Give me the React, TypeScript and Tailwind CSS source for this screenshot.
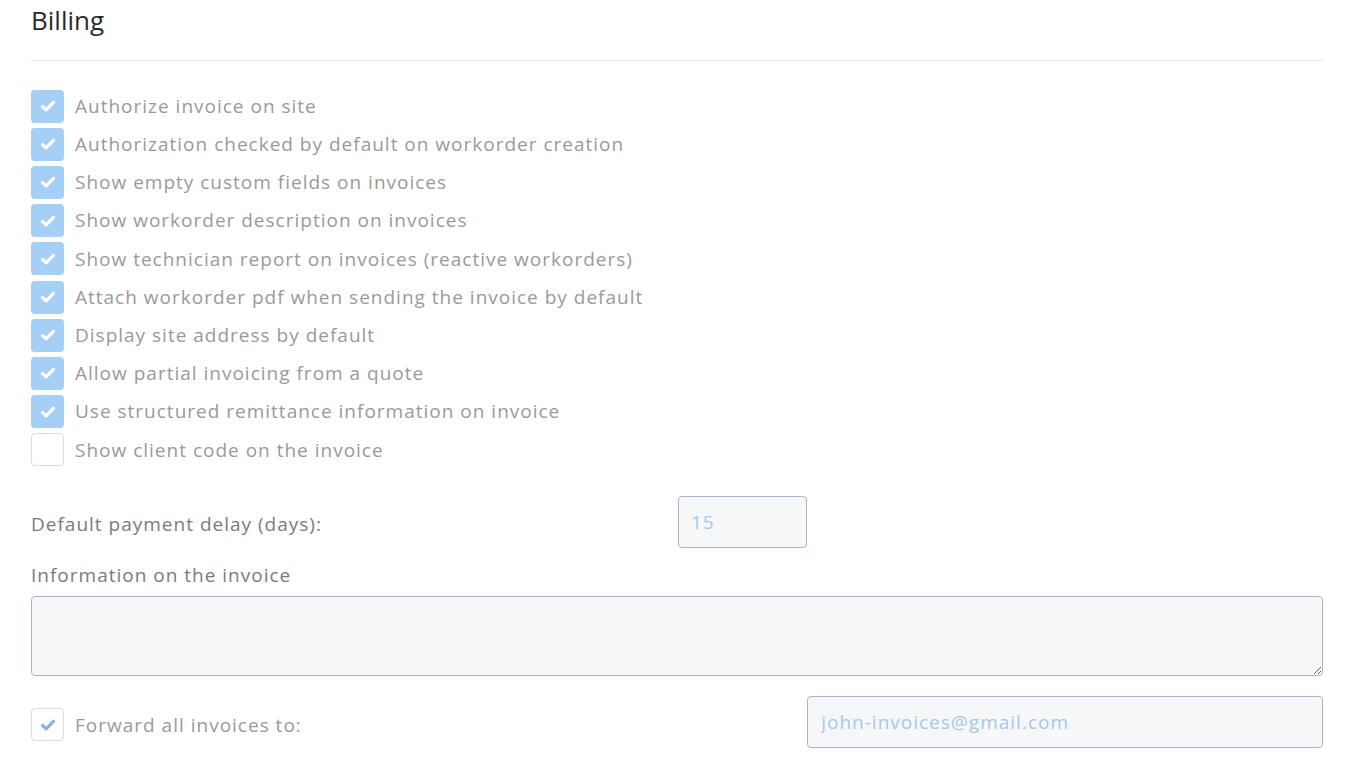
import React, { useState } from 'react';

// Billing settings options
const options: { label: string; checked: boolean }[] = [
    { label: 'Authorize invoice on site', checked: true },
    { label: 'Authorization checked by default on workorder creation', checked: true },
    { label: 'Show empty custom fields on invoices', checked: true },
    { label: 'Show workorder description on invoices', checked: true },
    { label: 'Show technician report on invoices (reactive workorders)', checked: true },
    { label: 'Attach workorder pdf when sending the invoice by default', checked: true },
    { label: 'Display site address by default', checked: true },
    { label: 'Allow partial invoicing from a quote', checked: true },
    { label: 'Use structured remittance information on invoice', checked: true },
    { label: 'Show client code on the invoice', checked: false },
];

const Check: React.FC<{ color: string }> = ({ color }) => (
    <svg width="18" height="18" viewBox="0 0 18 18" fill="none">
        <path d="M3.5 9.5l3.6 3.4 7.4-7.6" stroke={color} strokeWidth="3.2" strokeLinecap="round" strokeLinejoin="round" />
    </svg>
);

const Checkbox: React.FC<{ checked: boolean; muted?: boolean; onClick: () => void }> = ({ checked, muted, onClick }) => {
    if (muted) {
        return (
            <button onClick={onClick} className="w-[33px] h-[33px] shrink-0 rounded-[4px] border border-[#d5dde6] bg-white flex items-center justify-center">
                {checked && <Check color="#8fb0d3" />}
            </button>
        );
    }
    return (
        <button
            onClick={onClick}
            className={`w-[33px] h-[33px] shrink-0 rounded-[4px] flex items-center justify-center ${checked ? 'bg-[#a5cff5]' : 'bg-white border border-[#d5dde6]'}`}
        >
            {checked && <Check color="#ffffff" />}
        </button>
    );
};

export default function App() {
    const [checks, setChecks] = useState(options.map(o => o.checked));
    const [forward, setForward] = useState(true);

    return (
        <div className="bg-white min-h-[761px] pl-[31px] pr-[23px] text-[19px] tracking-[1px]" style={{ fontFamily: '"Open Sans", "Liberation Sans", sans-serif' }}>
            <h1 className="pt-[2px] h-[61px] text-[26px] leading-[36px] text-[#2b2b2b] border-b border-[#dde9f5] tracking-normal">Billing</h1>

            <div className="pt-[26px] flex flex-col">
                {options.map((o, i) => (
                    <label key={o.label} className="h-[38.2px] flex items-center gap-[11px] cursor-pointer">
                        <Checkbox checked={checks[i]} onClick={() => setChecks(c => c.map((v, j) => (j === i ? !v : v)))} />
                        <span className="text-[#9a9a9a]">{o.label}</span>
                    </label>
                ))}
            </div>

            <div className="mt-[27px] grid grid-cols-2 items-center">
                <span className="text-[#7b7b7b] pt-[4px]">Default payment delay (days):</span>
                <input
                    defaultValue="15"
                    className="ml-[1px] w-[129px] h-[52px] rounded-[4px] border border-[#a7b5c8] bg-[#f5f7f9] px-[12px] text-[#a6c7ee] outline-none"
                />
            </div>

            <div className="mt-[13px] text-[#7b7b7b]">Information on the invoice</div>
            <textarea className="mt-[7px] block w-full h-[80px] rounded-[4px] border border-[#a7b5c8] bg-[#f5f7f9] outline-none p-3" />

            <div className="mt-[20px] grid grid-cols-[60%_40%] items-center">
                <label className="flex items-center gap-[11px] pt-[5px]">
                    <Checkbox checked={forward} muted onClick={() => setForward(f => !f)} />
                    <span className="text-[#9a9a9a]">Forward all invoices to:</span>
                </label>
                <input
                    defaultValue="john-invoices@gmail.com"
                    className="ml-[1px] w-[calc(100%-1px)] h-[52px] rounded-[4px] border border-[#a7b5c8] bg-[#f5f7f9] px-[13px] text-[#a6c7ee] outline-none"
                />
            </div>
        </div>
    );
}
